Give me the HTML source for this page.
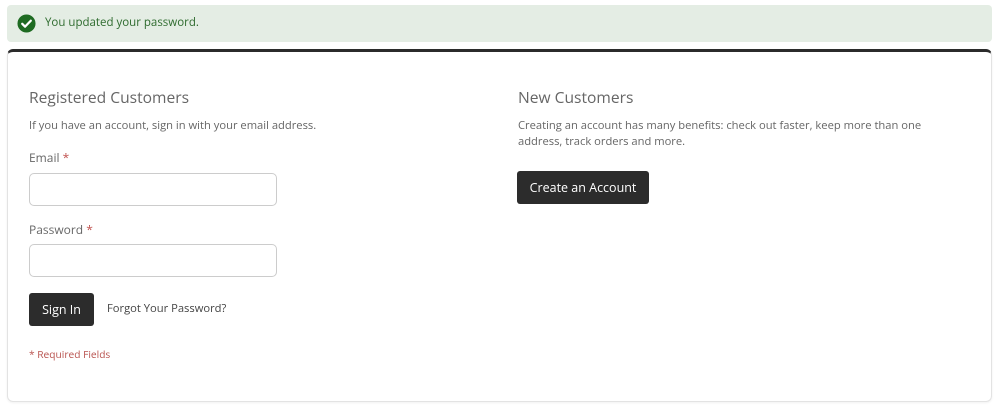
<!DOCTYPE html>
<html><head><meta charset="utf-8"><style>
*{box-sizing:border-box;margin:0;padding:0}
body{width:998px;height:408px;background:#fff;font-family:"Open Sans","Liberation Sans",sans-serif;position:relative;overflow:hidden;color:#555}
.msg{position:absolute;left:7px;top:5px;width:985px;height:37px;background:#e4ede4;border-radius:4px}
.msg svg{position:absolute;left:10px;top:9px}
.msg span{position:absolute;left:38px;top:10px;font-size:11.5px;color:#2e6b2e}
.card{position:absolute;left:7px;top:49px;width:985px;height:353px;border:1px solid #e3e3e3;border-top:3px solid #2b2b2b;border-radius:6px;box-shadow:0 1px 2px rgba(0,0,0,.06)}
h2{font-weight:normal;font-size:15.6px;color:#666;position:absolute;white-space:nowrap}
p{font-size:11.2px;color:#666;position:absolute;line-height:16px}
.lbl{font-size:12px;color:#666;position:absolute}
.lbl b{color:#c0504d;font-weight:normal}
.inp{position:absolute;width:248px;height:33px;border:1px solid #ccc;border-radius:5px;background:#fff}
.btn{position:absolute;background:#2c2c2c;color:#fff;font-size:12.5px;border-radius:3px;text-align:center}
</style></head><body>
<div class="msg">
<svg width="19" height="19" viewBox="0 0 20 20"><circle cx="10" cy="10" r="9.5" fill="#1e6b22"/><path d="M5.5 10.3l3 3 6-6.2" stroke="#fff" stroke-width="2.4" fill="none" stroke-linecap="round" stroke-linejoin="round"/></svg>
<span>You updated your password.</span>
</div>
<div class="card"></div>
<h2 style="left:29px;top:86px">Registered Customers</h2>
<p style="left:29px;top:118px">If you have an account, sign in with your email address.</p>
<div class="lbl" style="left:29px;top:149px">Email <b>*</b></div>
<div class="inp" style="left:29px;top:173px"></div>
<div class="lbl" style="left:29px;top:221px">Password <b>*</b></div>
<div class="inp" style="left:29px;top:244px"></div>
<div class="btn" style="left:29px;top:293px;width:65px;height:33px;line-height:33px">Sign In</div>
<p style="left:107px;top:301px;color:#444">Forgot Your Password?</p>
<p style="left:29px;top:346px;color:#b9534f;font-size:10.2px">* Required Fields</p>
<h2 style="left:518px;top:86px">New Customers</h2>
<p style="left:518px;top:118px;width:440px">Creating an account has many benefits: check out faster, keep more than one address, track orders and more.</p>
<div class="btn" style="left:517px;top:171px;width:132px;height:33px;line-height:33px">Create an Account</div>
</body></html>
